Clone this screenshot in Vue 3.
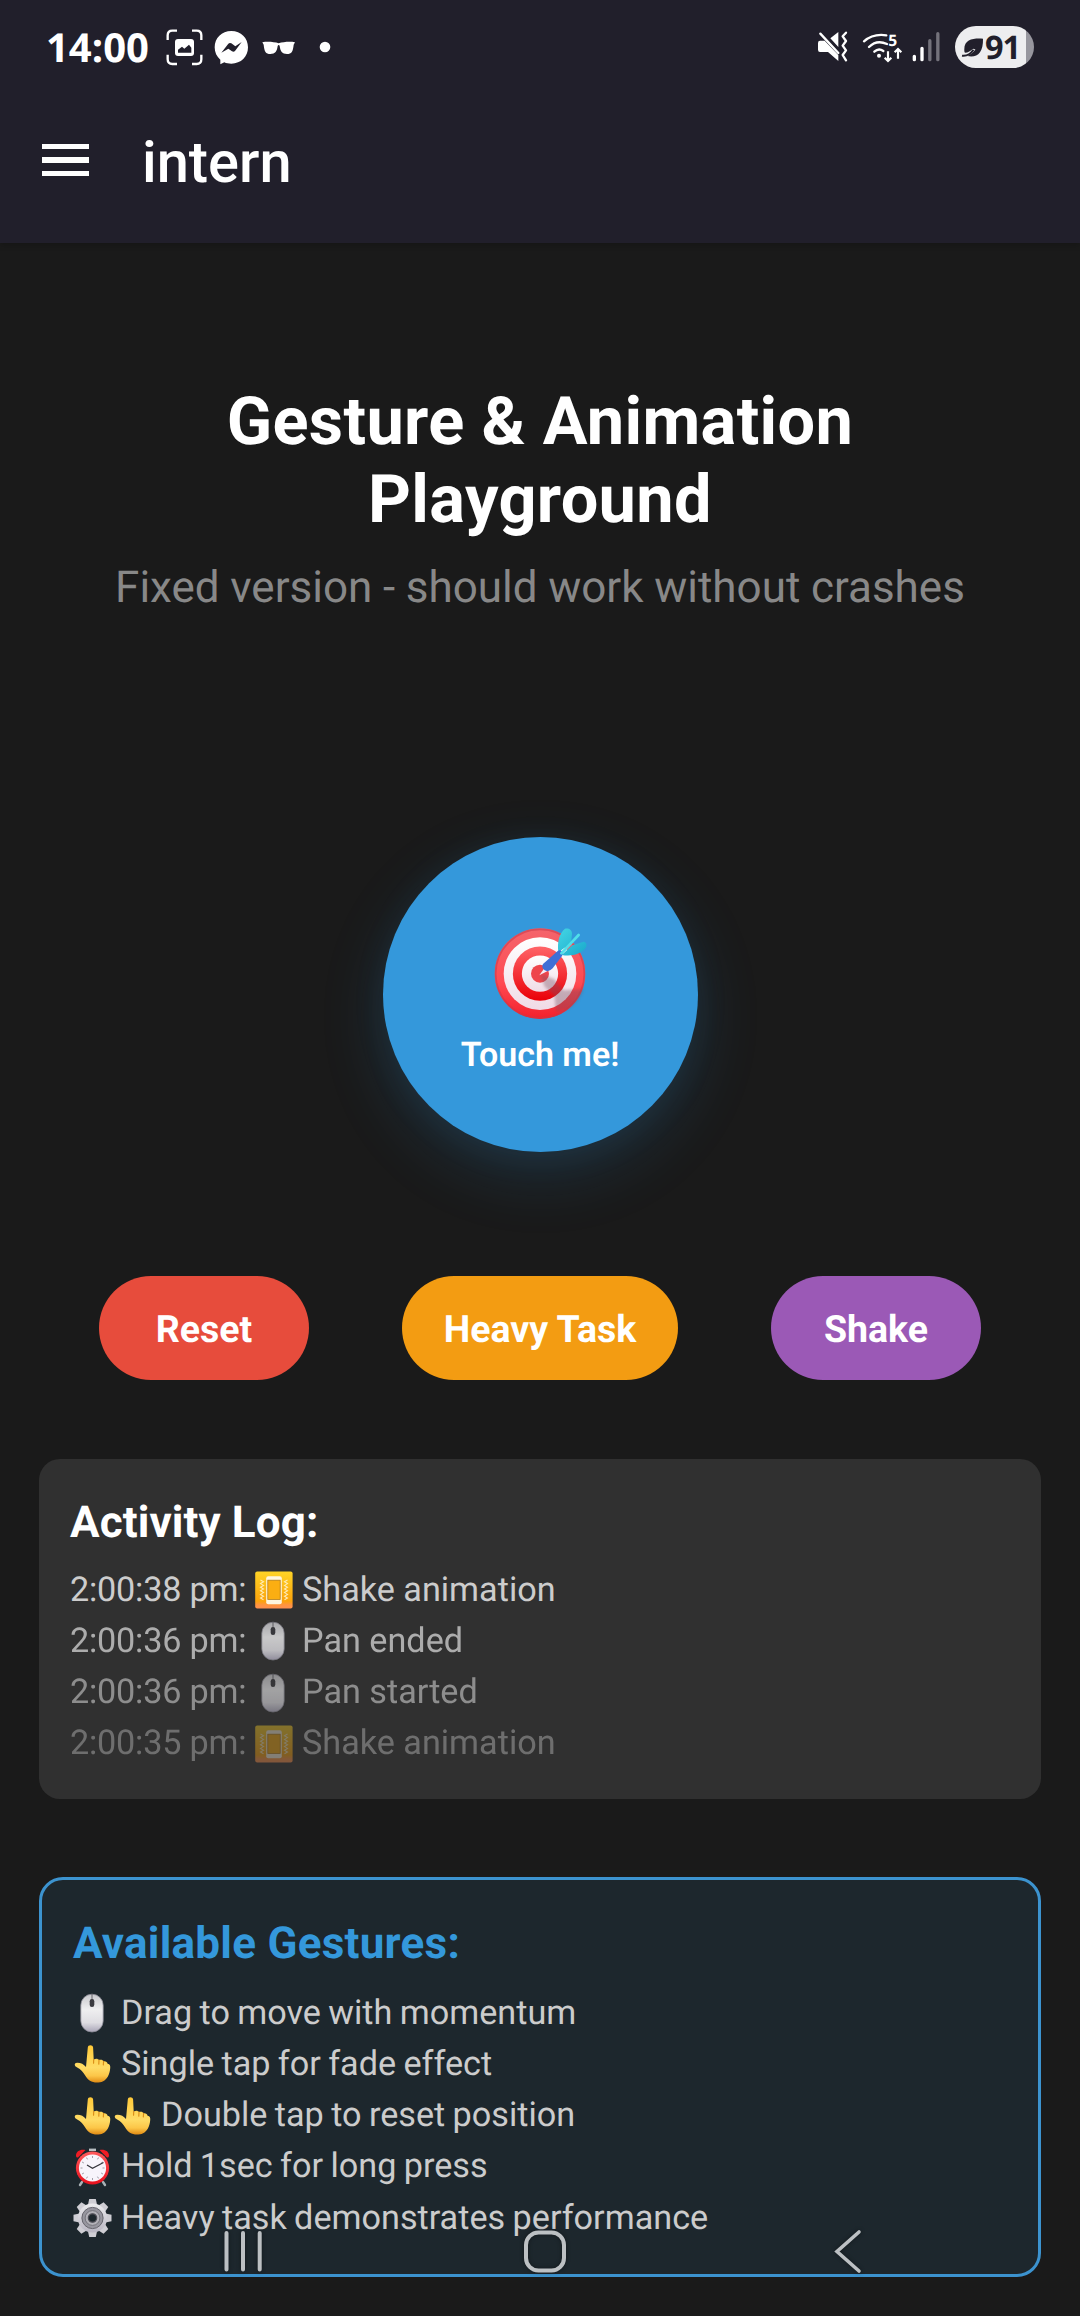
<script setup>
const logs = [
  { time: '2:00:38 pm:', icon: 'vibrate', text: 'Shake animation' },
  { time: '2:00:36 pm:', icon: 'mouse', text: 'Pan ended' },
  { time: '2:00:36 pm:', icon: 'mouse', text: 'Pan started' },
  { time: '2:00:35 pm:', icon: 'vibrate', text: 'Shake animation' },
]
const gestures = [
  { icons: ['mouse'], text: 'Drag to move with momentum' },
  { icons: ['hand'], text: 'Single tap for fade effect' },
  { icons: ['hand', 'hand'], text: 'Double tap to reset position' },
  { icons: ['clock'], text: 'Hold 1sec for long press' },
  { icons: ['gear'], text: 'Heavy task demonstrates performance' },
]
const ticks = Array.from({ length: 12 }, (_, i) => i * 30)
const teeth = Array.from({ length: 8 }, (_, i) => i * 45)
</script>

<template>
  <div class="screen">
    <svg class="defs" width="0" height="0" aria-hidden="true">
      <defs>
        <linearGradient id="gOrange" x1="0" y1="0" x2="0" y2="1">
          <stop offset="0" stop-color="#ffd426" /><stop offset=".8" stop-color="#fba30c" /><stop offset=".9" stop-color="#ff9440" /><stop offset="1" stop-color="#ff9050" />
        </linearGradient>
        <linearGradient id="gMouse" x1="0" y1="0" x2="0" y2="1">
          <stop offset="0" stop-color="#c8c8cc" /><stop offset=".4" stop-color="#efeff0" /><stop offset=".75" stop-color="#dedde2" /><stop offset="1" stop-color="#a9a5b8" />
        </linearGradient>
        <linearGradient id="gHand" x1="0" y1="0" x2="0" y2="1">
          <stop offset="0" stop-color="#ffc938" /><stop offset=".6" stop-color="#ffdc66" /><stop offset=".82" stop-color="#fcc648" /><stop offset="1" stop-color="#e08a12" />
        </linearGradient>
        <linearGradient id="gRed" x1="0" y1="0" x2="0" y2="1">
          <stop offset="0" stop-color="#ff5a5c" /><stop offset="1" stop-color="#e8101c" />
        </linearGradient>
        <linearGradient id="gGear" x1="0" y1="0" x2="0" y2="1">
          <stop offset="0" stop-color="#ececee" /><stop offset="1" stop-color="#b9b6c2" />
        </linearGradient>
        <linearGradient id="gRim" x1="0" y1="0" x2="0" y2="1">
          <stop offset="0" stop-color="#f4656c" /><stop offset=".6" stop-color="#ff4a52" /><stop offset="1" stop-color="#f3202c" />
        </linearGradient>
        <linearGradient id="gRing" x1="0" y1="0" x2="0" y2="1">
          <stop offset="0" stop-color="#ff6468" /><stop offset="1" stop-color="#ea0008" />
        </linearGradient>
        <linearGradient id="gWhite" x1="0" y1="0" x2="0" y2="1">
          <stop offset="0" stop-color="#ffffff" /><stop offset="1" stop-color="#f0dbe6" />
        </linearGradient>
        <linearGradient id="gFin" x1="0" y1="0" x2="1" y2="1">
          <stop offset="0" stop-color="#44d6e4" /><stop offset="1" stop-color="#18a8cc" />
        </linearGradient>
        <filter id="soft"><feGaussianBlur stdDeviation="4" /></filter>

        <symbol id="vibrate" viewBox="0 0 40 40">
          <rect x="1.2" y="1.4" width="37.4" height="37.2" rx="2" fill="url(#gOrange)" />
          <rect x="12.2" y="6.200" width="15.600" height="28" rx="2" fill="#fff6df" />
          <rect x="13.800" y="10.200" width="12.400" height="19.200" fill="#fbae12" stroke="#b57c18" stroke-width=".8" />
          <path d="M6.500 10l3 1.800-3 1.800 3 1.800-3 1.800 3 1.800-3 1.800 3 1.800-3 1.800 3 1.800-3 1.800 3 1.800M33.500 10l-3 1.800 3 1.800-3 1.800 3 1.800-3 1.800 3 1.800-3 1.800 3 1.800-3 1.800 3 1.800-3 1.800" fill="none" stroke="#fff3d0" stroke-width="1.100" opacity=".85" />
        </symbol>
        <symbol id="mouse" viewBox="0 0 40 40">
          <rect x="7.800" y="1.200" width="22.400" height="37.800" rx="11.200" fill="url(#gMouse)" stroke="#8c8a96" stroke-width=".8" />
          <path d="M19 1v6" stroke="#66666c" stroke-width="1" />
          <rect x="16.700" y="6" width="4.600" height="8" rx="2.200" fill="#3b3b40" />
        </symbol>
        <symbol id="hand" viewBox="0 0 40 40">
          <path d="M14.800 3.400c0-3 5.100-3 5.300 0l.6 12.200c2-1.500 4.300-1.200 5.300.5 1.800-1 4-.3 4.600 1.200 2-.4 3.700.6 4 2.400 2.500.3 2.900 2.300 2.600 4.500-.3 3-.9 5.800-2.300 8.200-2.500 4.400-6.600 6.200-11 6.200-5.300 0-9.200-2.600-11.700-7-1.800-3.200-4.400-6.600-8-8.200-3.300-1.400-3.100-4.600-.2-4.700 3.800-.1 6.700 1.400 9 4.200z" fill="url(#gHand)" />
          <path d="M20.700 15.500l-.1 3.800M26 16.100l-.2 4M30.600 17.300l-.3 3.600" stroke="#d98b16" stroke-width="1.100" stroke-linecap="round" fill="none" />
        </symbol>
        <symbol id="clock" viewBox="0 0 40 40">
          <path d="M9 35l-2 3M30 35l2 3" stroke="#a9b2b6" stroke-width="2.400" stroke-linecap="round" />
          <path d="M3 8.500c0-4 4-6.500 9.500-5.500L5 10.500c-1.300.3-2-.6-2-2zM36 8.500c0-4-4-6.500-9.500-5.500L34 10.500c1.300.3 2-.6 2-2z" fill="#f01c24" />
          <path d="M16 2.800h7" stroke="#b9c0c3" stroke-width="2.400" />
          <circle cx="19.500" cy="21" r="16.600" fill="url(#gRed)" />
          <circle cx="19.500" cy="21" r="13.600" fill="#f7f4fb" />
          <path v-for="t in ticks" :key="t" d="M19.500 9v2" stroke="#8d8a94" stroke-width=".8" :transform="`rotate(${t} 19.500 21)`" />
          <path d="M14 18l5.500 3.200 11-5.700" stroke="#34343a" stroke-width="1.200" fill="none" />
        </symbol>
        <symbol id="gear" viewBox="0 0 40 40">
          <g fill="url(#gGear)">
            <path v-for="t in teeth" :key="t" d="M14.900 7l1.300-6h6.600l1.300 6z" :transform="`rotate(${t} 19.500 20)`" fill="#cfced4" />
            <circle cx="19.500" cy="20" r="14.600" />
          </g>
          <circle cx="19.500" cy="20" r="10.600" fill="#97969f" stroke="#66656d" stroke-width="1" />
          <circle cx="19.500" cy="20" r="7.400" fill="#b2b1b8" stroke="#74737b" stroke-width="1" />
          <circle cx="19.500" cy="20" r="4.200" fill="#1d272d" stroke="#4d4c54" stroke-width="1.200" />
        </symbol>
      </defs>
    </svg>

    <header class="top">
      <div class="status">
        <span class="time">14:00</span>
        <svg class="left-icons" viewBox="492 84 510 120" fill="none">
          <path d="M503 120v-14q0-14 14-14h14M576 92h14q14 0 14 14v14M604 164v14q0 14-14 14h-14M531 192h-14q-14 0-14-14v-14" stroke="#fff" stroke-width="7" />
          <rect x="525" y="117" width="57" height="51" rx="9" fill="#fff" />
          <path d="M534 158v-9l12-9 7 6 14-12 7 9v15z" fill="#211f2b" />
          <path d="M694 93c29 0 50 21 50 49s-21 49-50 49c-8 0-15-1-21-4l-12 6v-14c-11-9-17-22-17-37 0-28 21-49 50-49z" fill="#fff" />
          <path d="M664 158l21-27q4-4 9-1l12 9 19-13-20 27q-4 4-9 1l-11-8z" fill="#211f2b" />
          <path d="M787 127c16-3 35-1 49 3 14-4 33-6 49-3l-4 7c-2 20-6 28-20 28-15 0-20-8-22-24-1-4-5-4-6 0-2 16-7 24-22 24-14 0-18-8-20-28z" fill="#fff" />
          <circle cx="975" cy="141" r="16" fill="#fff" />
        </svg>
        <div class="right">
          <svg class="right-icons" viewBox="108 84 384 114" fill="none">
            <path d="M121 101l54 58" stroke="#fff" stroke-width="7" stroke-linecap="round" />
            <path d="M120 122h14l41 43v18l-31-27h-24q-6 0-6-7v-20q0-7 6-7zM151 115l24-19v45z" fill="#fff" />
            <path d="M198 98l-10 11 10 14-10 14 10 14-10 14 10 16" stroke="#fff" stroke-width="7" stroke-linejoin="round" stroke-linecap="round" />
            <path d="M252 124q27-24 67-18M267 141q23-23 54-9M283 155q13-12 27-2" stroke="#fff" stroke-width="7" stroke-linecap="round" />
            <circle cx="297" cy="167" r="6" fill="#fff" />
            <path d="M324 154v28M314 173l10 10 10-10M354 176v-28M344 157l10-10 10 10" stroke="#fff" stroke-width="6.500" />
            <text x="325" y="138" class="band">5</text>
            <path d="M403 169v10M426 145v34" stroke="#fff" stroke-width="10" stroke-linecap="round" />
            <path d="M449.500 122v57M473.500 101v78" stroke="#74727b" stroke-width="10" stroke-linecap="round" />
          </svg>
          <div class="battery">
            <svg viewBox="543 108 70 64" fill="none">
              <path d="M610 113c-27-2-57 1-57 32 0 4 0 8 2 11 10 0 17-5 25-12l7 2c-7 8-15 15-25 20 30 6 49-9 48-53z" fill="#211f2b" />
              <path d="M546 165c14 2 26-5 35-18" stroke="#211f2b" stroke-width="6" />
            </svg>
            <span>91</span>
          </div>
        </div>
      </div>
      <div class="bar">
        <div class="menu"><i></i><i></i><i></i></div>
        <span class="app-name">intern</span>
      </div>
    </header>

    <main>
      <h1>Gesture &amp; Animation<br />Playground</h1>
      <p class="sub">Fixed version - should work without crashes</p>

      <div class="ball">
        <svg class="target" viewBox="103 80 282 280">
          <circle cx="241" cy="220" r="136" fill="url(#gRim)" />
          <circle cx="241" cy="220" r="133" fill="none" stroke="#c93848" stroke-width="5" opacity=".55" />
          <circle cx="241" cy="220" r="109" fill="url(#gWhite)" />
          <circle cx="241" cy="220" r="81.500" fill="url(#gRing)" />
          <circle cx="241" cy="220" r="54.500" fill="url(#gWhite)" />
          <circle cx="241" cy="220" r="27" fill="#ee454c" />
          <path d="M243 222l40 14 28 34 60-4c-6 22-24 46-46 60l-36 8-5-48-30-28z" fill="#77505e" opacity=".38" filter="url(#soft)" />
          <path d="M239 225l16-23 9 10z" fill="#f4eef6" />
          <path d="M296 156c-4-34 4-58 20-71 10-3 22 3 21 16l-3 28zM306 164l32-29 34-11c10 2 11 12 5 20-14 18-40 25-71 20z" fill="url(#gFin)" />
          <path d="M250 191l45-40q8-4 12 3 4 6 0 13l-28 37q-12 13-24 6-11-9-5-19z" fill="#3f6fd6" />
          <path d="M305 159l52-55" stroke="#4fe0ea" stroke-width="8" stroke-linecap="round" />
        </svg>
        <span>Touch me!</span>
      </div>

      <div class="buttons">
        <button class="reset">Reset</button>
        <button class="heavy">Heavy Task</button>
        <button class="shake">Shake</button>
      </div>

      <section class="card log">
        <h2>Activity Log:</h2>
        <div v-for="(l, i) in logs" :key="i" class="row" :style="{ opacity: 1 - i * 0.2 }">
          <span class="stamp">{{ l.time }}</span>
          <svg class="emoji"><use :href="'#' + l.icon" /></svg>
          <span class="txt">{{ l.text }}</span>
        </div>
      </section>

      <section class="card gestures">
        <h2>Available Gestures:</h2>
        <div v-for="g in gestures" :key="g.text" class="row">
          <svg v-for="(ic, k) in g.icons" :key="k" class="emoji"><use :href="'#' + ic" /></svg>
          <span class="txt">{{ g.text }}</span>
        </div>
      </section>
    </main>

    <nav class="sysnav">
      <svg viewBox="0 0 1080 60" fill="none" stroke="#bcc0c3" stroke-width="4">
        <path d="M226.500 13v36.500M243 13v36.500M259.700 13v36.500" stroke-linecap="round" />
        <rect x="526" y="12.500" width="38" height="38" rx="12.500" />
        <path d="M859 12L837 31.500l22 19.500" stroke-width="3.600" stroke-linecap="round" />
      </svg>
    </nav>
  </div>
</template>

<style>
html, body { background: #1a1a1a; }
</style>

<style scoped>
.screen {
  position: relative;
  width: 1080px;
  height: 2316px;
  overflow: hidden;
  background: #1a1a1a;
  color: #fff;
  font-family: Roboto, "Liberation Sans", sans-serif;
  text-rendering: geometricPrecision;
}
.defs { position: absolute; }
.top {
  height: 243px;
  background: #211f2b;
  box-shadow: 0 2px 6px rgba(0, 0, 0, 0.2);
}
.status {
  display: flex;
  align-items: center;
  height: 94px;
  padding: 0 46px 0 46px;
}
.time {
  width: 118px;
  font: 700 40px/94px "Open Sans", "Noto Sans", sans-serif;
}
.left-icons { width: 170px; height: 40px; margin-top: 2px; }
.right { display: flex; align-items: center; margin-left: auto; }
.right-icons { width: 128px; height: 38px; margin-right: 11px; }
.band { fill: #fff; font: 700 47px "Open Sans", sans-serif; }
.battery {
  display: flex;
  align-items: center;
  box-sizing: border-box;
  width: 79px;
  height: 42px;
  padding-left: 6px;
  border-radius: 21px;
  background: linear-gradient(90deg, #ededef 71px, #97969e 71px);
  color: #211f2b;
  font: 700 32.500px/42px "Open Sans", "Noto Sans", sans-serif;
  letter-spacing: -1px;
}
.battery svg { width: 23px; height: 21px; margin-right: 1px; }
.bar {
  display: flex;
  align-items: center;
  height: 132px;
  padding-left: 42px;
}
.menu { display: flex; flex-direction: column; gap: 8px; width: 47px; margin-right: 53px; }
.menu i { height: 5.300px; background: #fff; }
.app-name { font-size: 57.750px; font-weight: 500; line-height: 68px; margin-top: 5px; }

main { padding: 140px 39px 0; }
h1 {
  margin: 0;
  text-align: center;
  font-size: 66.700px;
  font-weight: 700;
  line-height: 78px;
  letter-spacing: 0.350px;
}
.sub {
  margin: 22px 0 0;
  text-align: center;
  color: #888;
  font-size: 44px;
  line-height: 52px;
  word-spacing: -0.300px;
}
.ball {
  display: flex;
  flex-direction: column;
  align-items: center;
  width: 315px;
  height: 315px;
  margin: 224px auto 0;
  border-radius: 50%;
  background: #3498db;
  box-shadow: 0 22px 64px rgba(52, 152, 219, 0.18), 0 6px 36px rgba(52, 152, 219, 0.07);
}
.target { width: 94px; height: 93.300px; margin: 90px 0 0 2px; flex: none; }
.ball span { margin-top: 15px; font-size: 34px; font-weight: 600; line-height: 40px; }

.buttons {
  display: flex;
  justify-content: space-between;
  margin-top: 124px;
  padding: 0 60px;
}
button {
  min-width: 210px;
  height: 104px;
  padding: 3px 42px 0;
  border: 0;
  border-radius: 52px;
  color: #fff;
  font: 700 37.500px/44px Roboto, sans-serif;
  text-rendering: geometricPrecision;
}
.reset { background: #e74c3c; }
.heavy { background: #f39c12; }
.shake { background: #9b59b6; }

.card { box-sizing: border-box; border-radius: 21px; }
h2 { margin: 0; font-size: 44px; font-weight: 700; line-height: 52px; letter-spacing: 0.100px; }
.log {
  height: 340px;
  margin-top: 79px;
  padding: 37px 31px 0;
  background: #303030;
}
.log h2 { margin-bottom: 16.500px; }
.row {
  display: flex;
  align-items: center;
  height: 51.300px;
  color: #ccc;
  font-size: 34.200px;
  line-height: 51.300px;
  white-space: nowrap;
}
.stamp { width: 184px; letter-spacing: -0.200px; }
.emoji { width: 40px; height: 40px; flex: none; }
.txt { margin-left: 8px; }
.gestures {
  height: 400px;
  margin-top: 78px;
  padding: 36.500px 31px 0;
  border: 3px solid #3c93cf;
  border-radius: 24px;
  background: #1d272d;
}
.gestures h2 { margin-bottom: 19px; color: #3498db; letter-spacing: 0.250px; }
.gestures .txt { word-spacing: -1.100px; }

.sysnav { position: absolute; left: 0; right: 0; top: 2220px; height: 60px; }
.sysnav svg { display: block; width: 1080px; height: 60px; filter: drop-shadow(0 0 2px rgba(0, 0, 0, 0.4)); }
</style>
